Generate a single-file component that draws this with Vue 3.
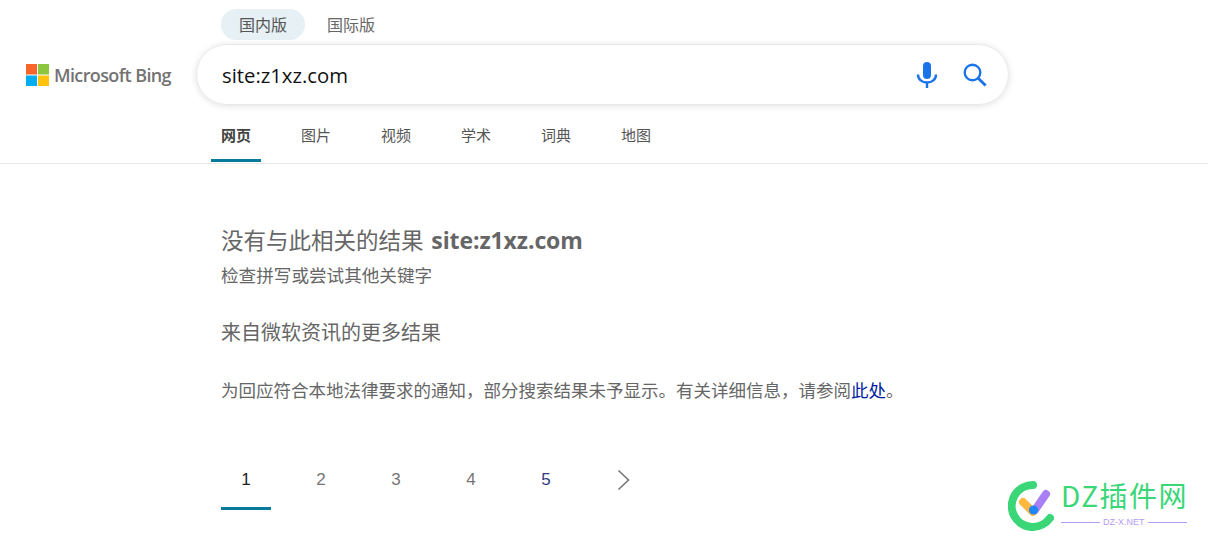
<template>
  <div class="page">
    <header class="header">
      <div class="scope-row">
        <span class="scope active">国内版</span>
        <span class="scope">国际版</span>
      </div>

      <div class="search-row">
        <div class="logo">
          <svg width="23" height="22" viewBox="0 0 23 22">
            <rect x="0" y="0" width="11" height="10.5" fill="#f8652a" />
            <rect x="12" y="0" width="11" height="10.5" fill="#8cc63f" />
            <rect x="0" y="11.5" width="11" height="10.5" fill="#00aeef" />
            <rect x="12" y="11.5" width="11" height="10.5" fill="#ffc20e" />
          </svg>
          <span class="logo-text">Microsoft Bing</span>
        </div>
        <div class="search-box">
          <span class="query">site:z1xz.com</span>
          <svg class="mic" width="22" height="26" viewBox="0 0 22 26">
            <rect x="7" y="0" width="8" height="17" rx="4" fill="#1a73e8" />
            <path d="M2 12.5c0 5 4 8 9 8s9-3 9-8" fill="none" stroke="#1a73e8" stroke-width="2.4" />
            <rect x="9.8" y="20" width="2.4" height="6" fill="#1a73e8" />
          </svg>
          <svg class="lens" width="24" height="24" viewBox="0 0 24 24">
            <circle cx="9.5" cy="9.5" r="7.8" fill="none" stroke="#1a73e8" stroke-width="2.4" />
            <path d="M15.2 15.2 22.6 22.6" stroke="#1a73e8" stroke-width="2.8" />
          </svg>
        </div>
      </div>

      <nav class="tabs">
        <a v-for="tab in tabs" :key="tab" class="tab" :class="{ active: tab === '网页' }">{{ tab }}</a>
      </nav>
    </header>

    <main class="results">
      <h1 class="no-result">没有与此相关的结果 <strong>site:z1xz.com</strong></h1>
      <p class="hint">检查拼写或尝试其他关键字</p>
      <h2 class="more">来自微软资讯的更多结果</h2>
      <p class="notice">为回应符合本地法律要求的通知，部分搜索结果未予显示。有关详细信息，请参阅<a class="link">此处</a>。</p>

      <div class="pager">
        <a v-for="n in pages" :key="n" class="page-num" :class="{ current: n === 1, dark: n === 5 }">{{ n }}</a>
        <svg class="next" width="14" height="22" viewBox="0 0 14 22">
          <path d="M1.5 1.5 11.5 11 1.5 20.5" fill="none" stroke="#767676" stroke-width="1.6" />
        </svg>
      </div>
    </main>

    <!-- watermark -->
    <div class="watermark">
      <svg width="46" height="52" viewBox="0 0 46 52">
        <path d="M25 6A21 21 0 1 0 42 39" fill="none" stroke="#3bd677" stroke-width="8" stroke-linecap="round" />
        <path d="M15 23 25 33" stroke="#ffb83f" stroke-width="8" stroke-linecap="round" />
        <path d="M27 31 38 15" stroke="#a97ff5" stroke-width="8" stroke-linecap="round" />
        <circle cx="25.500" cy="31" r="4.600" fill="#1f87f5" />
      </svg>
      <div class="mark-text">
        <div class="mark-title">DZ插件网</div>
        <div class="mark-sub"><i></i><span>DZ-X.NET</span><i></i></div>
      </div>
    </div>
  </div>
</template>

<script setup>
const tabs = ['网页', '图片', '视频', '学术', '词典', '地图'];
const pages = [1, 2, 3, 4, 5];
</script>

<style>
html, body {
  margin: 0;
  background: #fff;
}
</style>

<style scoped>
.page {
  position: relative;
  width: 1208px;
  height: 546px;
  overflow: hidden;
  font-family: "Open Sans", "Noto Sans CJK SC", sans-serif;
  color: #666;
}

.header {
  height: 164px;
  box-sizing: border-box;
  padding-top: 9px;
  border-bottom: 1px solid #e8e8e8;
}

.scope-row {
  display: flex;
  margin-left: 221px;
  height: 31px;
}

.scope {
  width: 84px;
  margin-right: 4px;
  border-radius: 16px;
  line-height: 32px;
  text-align: center;
  font-size: 16px;
  color: #666;
}

.scope.active {
  background: #e6f0f5;
  color: #555;
}

.search-row {
  display: flex;
  align-items: center;
  margin-top: 4px;
}

.logo {
  display: flex;
  align-items: center;
  width: 196px;
  padding-left: 26px;
  box-sizing: border-box;
}

.logo-text {
  margin-left: 5px;
  font-size: 18px;
  font-weight: 600;
  letter-spacing: -0.62px;
  color: #737373;
}

.search-box {
  display: flex;
  align-items: center;
  width: 813px;
  height: 61px;
  box-sizing: border-box;
  padding: 0 21px 0 25px;
  border: 1px solid #e8e8e8;
  border-radius: 31px;
  box-shadow: 0 1px 6px rgba(32, 33, 36, 0.14);
}

.query {
  flex: 1;
  font-size: 20.3px;
  color: #111;
}

.mic {
  margin-right: 25px;
}

.tabs {
  display: flex;
  margin: 15px 0 0 211px;
}

.tab {
  width: 50px;
  height: 42px;
  margin-right: 30px;
  box-sizing: border-box;
  padding-top: 5px;
  text-align: center;
  font-size: 15px;
  line-height: 20px;
  color: #555;
}

.tab.active {
  border-bottom: 3px solid #067a9a;
  font-weight: 700;
  color: #444;
}

.results {
  padding: 60px 0 0 221px;
}

.no-result {
  margin: 0;
  font-size: 22.5px;
  line-height: 32px;
  font-weight: 400;
  color: #666;
}

.no-result strong {
  margin-left: 2px;
  font-size: 23px;
  font-weight: 700;
  letter-spacing: -0.1px;
}

.hint {
  margin: 6px 0 0;
  font-size: 17.6px;
  line-height: 24px;
  color: #666;
}

.more {
  margin: 32px 0 0;
  font-size: 20px;
  line-height: 28px;
  font-weight: 400;
  color: #666;
}

.notice {
  margin: 29px 0 0;
  font-size: 17.5px;
  line-height: 28px;
  color: #666;
}

.link {
  color: #001ba0;
  font-weight: 400;
}

.pager {
  display: flex;
  align-items: center;
  margin-top: 46px;
  height: 60px;
}

.page-num {
  width: 50px;
  height: 60px;
  margin-right: 25px;
  box-sizing: border-box;
  padding-top: 19px;
  text-align: center;
  font-family: "Liberation Sans", sans-serif;
  font-size: 17px;
  line-height: 22px;
  color: #767676;
}

.page-num.current {
  border-bottom: 3px solid #067a9a;
  color: #222;
}

.page-num.dark {
  color: #333a80;
}

.next {
  margin: 0 0 0 21px;
}

.watermark {
  position: absolute;
  left: 1008px;
  top: 479px;
  display: flex;
  width: 190px;
}

.mark-text {
  margin-left: 7px;
}

.mark-title {
  font-family: "Noto Sans CJK SC", sans-serif;
  font-size: 28px;
  line-height: 33px;
  letter-spacing: 1.5px;
  color: #3bd677;
}

.mark-sub {
  display: flex;
  align-items: center;
  gap: 3px;
  margin-top: 5px;
  font-family: "Liberation Sans", sans-serif;
  font-size: 9px;
  line-height: 10px;
  color: #b59bf5;
}

.mark-sub i {
  display: block;
  width: 39px;
  height: 1px;
  background: #b59bf5;
}
</style>
